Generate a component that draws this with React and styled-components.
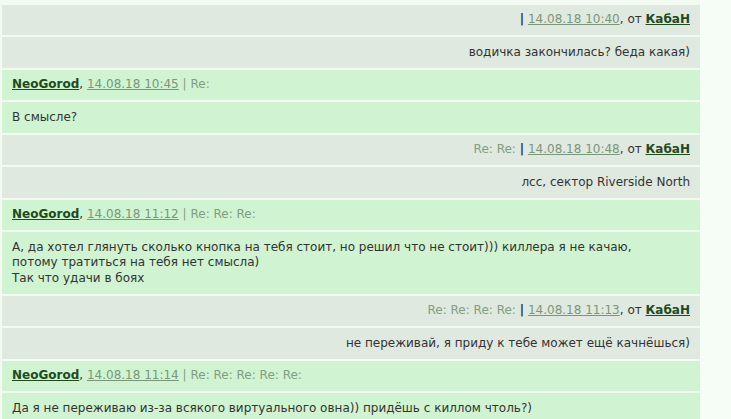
import React from "react";
import styled, { createGlobalStyle, css } from "styled-components";

const GlobalStyle = createGlobalStyle`
  html, body {
    margin: 0;
    padding: 0;
    background: #f6fcf6;
  }
  body {
    font-family: "DejaVu Sans", Verdana, sans-serif;
    font-size: 12px;
    color: #333;
  }
`;

const tones = {
  gray: "#dfe9df",
  green: "#d0f4d1",
};

const Page = styled.div`
  width: 731px;
  height: 419px;
  overflow: hidden;
  background: #f6fcf6;
`;

const Thread = styled.div`
  width: 698px;
  padding: 4.5px 0 0 2px;
  display: flex;
  flex-direction: column;
  gap: 2px;
  background: #f2faf2;
`;

const Row = styled.div`
  padding: 7.5px 10px;
  line-height: 15.5px;
  background: ${({ $tone }) => tones[$tone]};
  text-align: ${({ $right }) => ($right ? "right" : "left")};
`;

const Author = styled.a`
  color: #1e4a1e;
  font-weight: bold;
  text-decoration: underline;
`;

const Stamp = styled.a`
  color: #7b967b;
  text-decoration: underline;
`;

const Muted = styled.span`
  color: #839d83;
`;

const Pipe = styled.span`
  color: ${({ $dark }) => ($dark ? "#333" : "#839d83")};
  ${({ $dark }) =>
    $dark &&
    css`
      font-weight: bold;
    `}
`;

const Body = styled.div`
  white-space: pre-line;
`;

const messages = [
  {
    from: "КабаН",
    mine: false,
    time: "14.08.18 10:40",
    depth: 0,
    text: "водичка закончилась? беда какая)",
  },
  {
    from: "NeoGorod",
    mine: true,
    time: "14.08.18 10:45",
    depth: 1,
    text: "В смысле?",
  },
  {
    from: "КабаН",
    mine: false,
    time: "14.08.18 10:48",
    depth: 2,
    text: "лсс, сектор Riverside North",
  },
  {
    from: "NeoGorod",
    mine: true,
    time: "14.08.18 11:12",
    depth: 3,
    text:
      "А, да хотел глянуть сколько кнопка на тебя стоит, но решил что не стоит))) киллера я не качаю,\nпотому тратиться на тебя нет смысла)\nТак что удачи в боях",
  },
  {
    from: "КабаН",
    mine: false,
    time: "14.08.18 11:13",
    depth: 4,
    text: "не переживай, я приду к тебе может ещё качнёшься)",
  },
  {
    from: "NeoGorod",
    mine: true,
    time: "14.08.18 11:14",
    depth: 5,
    text: "Да я не переживаю из-за всякого виртуального овна)) придёшь с киллом чтоль?)",
  },
];

const re = (n) => Array(n).fill("Re:").join(" ");

const Message = ({ from, mine, time, depth, text }) => {
  const tone = mine ? "green" : "gray";
  return (
    <>
      {mine ? (
        <Row $tone={tone}>
          <Author href="#">{from}</Author>, <Stamp href="#">{time}</Stamp>{" "}
          <Pipe>|</Pipe> <Muted>{re(depth)}</Muted>
        </Row>
      ) : (
        <Row $tone={tone} $right>
          {depth > 0 && <Muted>{re(depth)} </Muted>}
          <Pipe $dark>|</Pipe> <Stamp href="#">{time}</Stamp>, от{" "}
          <Author href="#">{from}</Author>
        </Row>
      )}
      <Row $tone={tone} $right={!mine}>
        <Body>{text}</Body>
      </Row>
    </>
  );
};

const App = () => (
  <Page>
    <GlobalStyle />
    <Thread>
      {messages.map((m) => (
        <Message key={m.time} {...m} />
      ))}
    </Thread>
  </Page>
);

export default App;
